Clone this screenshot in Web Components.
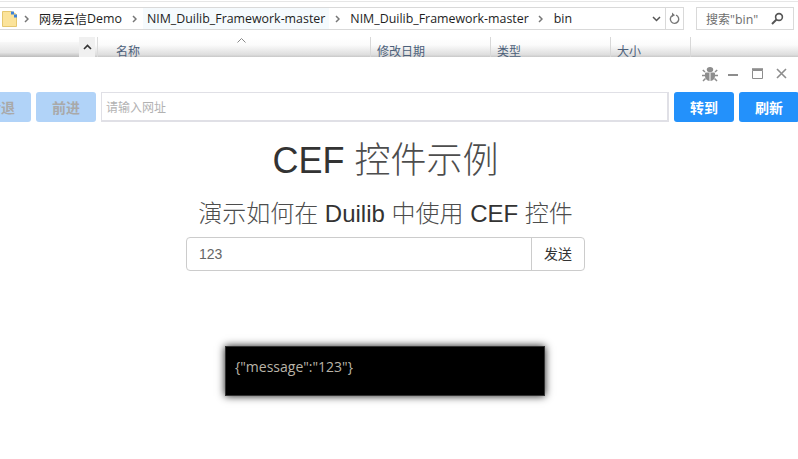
<!DOCTYPE html>
<html>
<head>
<meta charset="utf-8">
<title>CEF</title>
<style>
  html, body { margin: 0; padding: 0; }
  body { width: 798px; height: 459px; overflow: hidden; background: #fff; font-family: "Liberation Sans", "Noto Sans CJK SC", sans-serif; }
</style>
</head>
<body>
<explorer-bar></explorer-bar>
<app-window>
  <nav-toolbar></nav-toolbar>
  <demo-panel></demo-panel>
  <message-box>{"message":"123"}</message-box>
</app-window>

<script>
class ExplorerBar extends HTMLElement {
  constructor() {
    super();
    this.attachShadow({ mode: "open" });
  }

  connectedCallback() {
    this.shadowRoot.innerHTML = /*html*/ `
      <style>
        :host { display: block; height: 57px; background: #fff; font-family: "Open Sans", "Noto Sans CJK SC", sans-serif; font-size: 12.4px; color: #1e1e1e; overflow: hidden; }
        .top { height: 7px; box-sizing: border-box; margin-top: 1px; border-top: 1px solid #e6e6e6; }
        .nav { display: flex; height: 23px; margin-top: -1px; }
        .address { flex: none; width: 684px; box-sizing: border-box; display: flex; align-items: center; border: 1px solid #d9d9d9; border-left: 0; }
        .folder { flex: none; width: 15px; height: 16px; margin-left: 2px; }
        .crumb { display: flex; align-items: center; height: 21px; white-space: nowrap; }
        .crumb.hover { background: #f5fafd; }
        .sep { flex: none; width: 5px; height: 8px; }
        .cjk { font-size: 12px; }
        .grow { flex: 1; }
        .drop { flex: none; width: 9px; height: 6px; margin-right: 4px; }
        .refresh { flex: none; width: 17px; height: 21px; display: flex; align-items: center; justify-content: center; border-left: 1px solid #d9d9d9; }
        .search { flex: none; width: 98px; box-sizing: border-box; margin-left: 12px; display: flex; align-items: center; border: 1px solid #d9d9d9; color: #6d6d6d; padding-left: 9px; white-space: nowrap; }
        .search svg { margin-left: auto; margin-right: 9px; }
        .cols { display: flex; height: 20px; margin-top: 7px; background: linear-gradient(#fff 0, #fbfbfb 40%, #dedede 88%, #c8c8c8 100%); border-bottom: 1px solid #a5a5a5; color: #4c607a; font-size: 12px; }
        .side { flex: none; width: 79px; height: 15px; margin-top: 5px; background: linear-gradient(#f8f8f8, #e4e4e4 70%, #bcbcbc); align-self: flex-start; }
        .thumb { flex: none; width: 16px; height: 20px; background: #f0f0f0; display: flex; align-items: center; justify-content: center; padding-bottom: 1px; box-sizing: border-box; }
        .gap { flex: none; width: 2px; border-right: 1px solid #dcdcdc; }
        .col { flex: none; box-sizing: border-box; padding-top: 7px; line-height: 16px; border-right: 1px solid #d8d8d8; white-space: nowrap; position: relative; }
        .sort { position: absolute; left: 139px; top: 1px; width: 9px; height: 5px; }
        .end { flex: 1; }
      </style>
      <div class="top"></div>
      <div class="nav">
        <div class="address">
          <svg class="folder" viewBox="0 0 15 16"><path d="M.5.5h9l5 3v12H.5z" fill="#fbe39a" stroke="#e5c76e"/><path d="M9 .5h3v3h3v3h-3v-3H9z" fill="#3d83d9"/></svg>
          <svg class="sep" style="margin-left:7px" viewBox="0 0 5 8"><path d="M1 1l3 3-3 3" fill="none" stroke="#777" stroke-width="1.5"/></svg>
          <span class="crumb" style="margin-left:10px"><span class="cjk">网易云信</span>Demo</span>
          <svg class="sep" style="margin-left:10px" viewBox="0 0 5 8"><path d="M1 1l3 3-3 3" fill="none" stroke="#777" stroke-width="1.5"/></svg>
          <span class="crumb hover" style="margin-left:6px;padding:0 4px">NIM_Duilib_Framework-master</span>
          <svg class="sep" style="margin-left:6px" viewBox="0 0 5 8"><path d="M1 1l3 3-3 3" fill="none" stroke="#777" stroke-width="1.5"/></svg>
          <span class="crumb" style="margin-left:10px">NIM_Duilib_Framework-master</span>
          <svg class="sep" style="margin-left:9px" viewBox="0 0 5 8"><path d="M1 1l3 3-3 3" fill="none" stroke="#777" stroke-width="1.5"/></svg>
          <span class="crumb" style="margin-left:11px">bin</span>
          <span class="grow"></span>
          <svg class="drop" viewBox="0 0 9 6"><path d="M1 1l3.500 3.500L8 1" fill="none" stroke="#555" stroke-width="1.5"/></svg>
          <span class="refresh"><svg width="11" height="13" viewBox="0 0 11 13"><path d="M7 3.200A4.200 4.200 0 1 1 3.600 3.400" fill="none" stroke="#777" stroke-width="1.400"/><path d="M3 .5l3 2.800-3 1.600z" fill="#777"/></svg></span>
        </div>
        <div class="search"><span><span class="cjk">搜索</span>"bin"</span><svg width="13" height="13" viewBox="0 0 13 13"><circle cx="8" cy="5" r="3.400" fill="none" stroke="#555" stroke-width="1.600"/><path d="M5.500 7.500L1 12" stroke="#555" stroke-width="2"/></svg></div>
      </div>
      <div class="cols">
        <div class="side"></div>
        <div class="thumb"><svg width="9" height="6" viewBox="0 0 9 6"><path d="M1 5l3.500-3.500L8 5" fill="none" stroke="#333" stroke-width="1.600"/></svg></div>
        <div class="gap"></div>
        <div class="col" style="width:273px;padding-left:18px">名称<svg class="sort" viewBox="0 0 9 5"><path d="M.5 4.500l4-4 4 4" fill="none" stroke="#888"/></svg></div>
        <div class="col" style="width:120px;padding-left:6px">修改日期</div>
        <div class="col" style="width:120px;padding-left:6px">类型</div>
        <div class="col" style="width:80px;padding-left:6px">大小</div>
        <div class="end"></div>
      </div>
    `;
  }
}

class WinControls extends HTMLElement {
  constructor() {
    super();
    this.attachShadow({ mode: "open" });
  }

  connectedCallback() {
    this.shadowRoot.innerHTML = /*html*/ `
      <style>
        :host { display: flex; justify-content: flex-end; align-items: center; height: 35px; padding-right: 11px; gap: 10px; position: relative; top: -1px; }
        svg { display: block; flex: none; }
      </style>
      <svg width="16" height="16" viewBox="0 0 16 16" fill="#8d8d8d">
        <ellipse cx="8" cy="3.600" rx="3.200" ry="2.600"/>
        <path d="M3.800 6.400h8.400c.5 0 .8.4.8.9V10c0 2.800-2.200 5-5 5s-5-2.200-5-5V7.300c0-.5.3-.9.8-.9z"/>
        <path d="M3 6L.8 4M13 6l2.200-2M3 9.500H0M13 9.500h3M3.500 12.500L1 15M12.500 12.500L15 15" stroke="#8d8d8d" stroke-width="1.500" fill="none"/>
        <path d="M8 6.500V15" stroke="#fff"/>
      </svg>
      <svg width="10" height="2" viewBox="0 0 10 2" style="position:relative;top:1px"><path d="M0 1h10" stroke="#8d8d8d" stroke-width="2"/></svg>
      <svg width="11" height="11" viewBox="0 0 11 11" style="margin:0 3px 0 4px"><path d="M.5 2.500h10v8H.5z" fill="none" stroke="#8d8d8d"/><path d="M0 1.200h11" stroke="#8d8d8d" stroke-width="2"/></svg>
      <svg width="11" height="11" viewBox="0 0 11 11"><path d="M1 1l9 9M10 1l-9 9" stroke="#8d8d8d" stroke-width="1.600"/></svg>
    `;
  }
}

class NavButton extends HTMLElement {
  constructor() {
    super();
    this.attachShadow({ mode: "open" });
  }

  connectedCallback() {
    this.shadowRoot.innerHTML = /*html*/ `
      <style>
        :host { display: flex; flex: none; width: 60px; height: 30px; align-items: center; justify-content: center; border-radius: 3px; background: #2391fb; color: #fff; font: bold 14px "Noto Sans CJK SC", sans-serif; }
        :host([disabled]) { background: #b1d3f8; color: #a9a9a9; }
      </style>
      <slot></slot>
    `;
  }
}

class NavToolbar extends HTMLElement {
  constructor() {
    super();
    this.attachShadow({ mode: "open" });
  }

  connectedCallback() {
    this.shadowRoot.innerHTML = /*html*/ `
      <style>
        :host { display: flex; gap: 5px; height: 30px; margin-left: -29px; width: 830px; }
        .url { flex: none; width: 568px; height: 30px; box-sizing: border-box; border: 2px solid #e0e0e6; border-width: 1px 2px 2px 1px; padding-left: 4px; display: flex; align-items: center; font: 12px "Noto Sans CJK SC", sans-serif; color: #b2b2b2; background: #fff; }
      </style>
      <nav-button disabled>后退</nav-button>
      <nav-button disabled>前进</nav-button>
      <div class="url">请输入网址</div>
      <nav-button>转到</nav-button>
      <nav-button>刷新</nav-button>
    `;
  }
}

class DemoPanel extends HTMLElement {
  constructor() {
    super();
    this.attachShadow({ mode: "open" });
  }

  connectedCallback() {
    this.shadowRoot.innerHTML = /*html*/ `
      <style>
        :host { display: block; width: 399px; margin-left: 186px; color: #333; font-family: "Liberation Sans", "Noto Sans CJK SC", sans-serif; text-align: center; }
        h1 { margin: 17px 0 0; font-size: 36px; font-weight: 300; line-height: 44px; white-space: nowrap; }
        h3 { margin: 15px 0 0; font-size: 24px; font-weight: 300; line-height: 31px; white-space: nowrap; }
        .thin { color: #4d4d4d; }
        .group { display: flex; height: 34px; margin-top: 8px; box-sizing: border-box; border: 1px solid #ccc; border-radius: 4px; font-size: 14px; text-align: left; }
        .field { flex: 1; padding-left: 12px; line-height: 32px; color: #666; }
        .send { flex: none; width: 52px; text-align: center; line-height: 32px; border-left: 1px solid #ccc; }
      </style>
      <h1>CEF <span class="thin">控件示例</span></h1>
      <h3><span class="thin">演示如何在</span> Duilib <span class="thin">中使用</span> CEF <span class="thin">控件</span></h3>
      <div class="group"><div class="field">123</div><div class="send">发送</div></div>
    `;
  }
}

class MessageBox extends HTMLElement {
  constructor() {
    super();
    this.attachShadow({ mode: "open" });
  }

  connectedCallback() {
    this.shadowRoot.innerHTML = /*html*/ `
      <style>
        :host { position: absolute; left: 225px; top: 346px; width: 320px; height: 50px; box-sizing: border-box; background: #000; border: 1px solid #333; box-shadow: 0 0 8px rgba(0,0,0,.9); color: #b9b4a8; font: 14px "Open Sans", sans-serif; padding: 10px 9px; line-height: 20px; }
      </style>
      <slot></slot>
    `;
  }
}

class AppWindow extends HTMLElement {
  constructor() {
    super();
    this.attachShadow({ mode: "open" });
  }

  connectedCallback() {
    this.shadowRoot.innerHTML = /*html*/ `
      <style>
        :host { display: block; height: 402px; overflow: hidden; background: #fff; }
      </style>
      <win-controls></win-controls>
      <slot></slot>
    `;
  }
}

customElements.define("explorer-bar", ExplorerBar);
customElements.define("win-controls", WinControls);
customElements.define("nav-button", NavButton);
customElements.define("nav-toolbar", NavToolbar);
customElements.define("demo-panel", DemoPanel);
customElements.define("message-box", MessageBox);
customElements.define("app-window", AppWindow);
</script>
</body>
</html>
